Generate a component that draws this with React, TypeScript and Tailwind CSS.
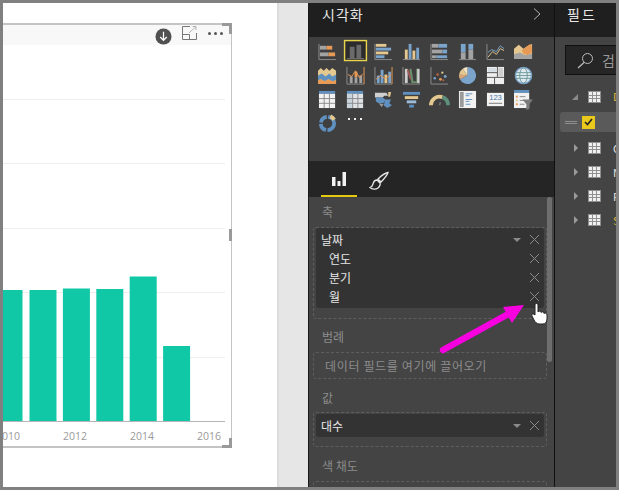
const KR = "font-['Noto_Sans_CJK_KR','Noto_Sans',sans-serif]";

const BARS = [
  { w: 19.5, top: 290 },
  { w: 27, top: 290 },
  { w: 27, top: 288.5 },
  { w: 27, top: 289 },
  { w: 27, top: 276.5 },
  { w: 27, top: 346 },
];

const GRIDLINES = [99, 163, 228, 292, 357];

const ORANGE = '#e79a55';
const TAN = '#e5c88f';
const BLUE = '#7ba4cc';
const GRAY = '#a3a3a3';
const LINE = '#8d8d8d';

function Axis() {
  return <path d="M1 2V18.5H19" fill="none" stroke={LINE} strokeWidth="1" />;
}

const ICONS: React.ReactNode[] = [
  <>
    <Axis />
    <rect x="2" y="4" width="7" height="4" fill={GRAY} />
    <rect x="9" y="4" width="6" height="4" fill={ORANGE} />
    <rect x="2" y="11" width="9" height="4" fill={GRAY} />
    <rect x="11" y="11" width="7" height="4" fill={ORANGE} />
  </>,
  <>
    <rect x="-1.5" y="-1.5" width="23" height="21" fill="#2c2c2c" stroke="#e8d44d" strokeWidth="1.5" />
    <rect x="4" y="5" width="5" height="12" fill="#6a6a6a" />
    <rect x="11" y="3" width="5" height="14" fill="#6a6a6a" />
    <path d="M1 17.5H19" stroke="#777" />
  </>,
  <>
    <Axis />
    <rect x="2" y="2" width="11" height="3" fill={TAN} />
    <rect x="2" y="6" width="16" height="3" fill={BLUE} />
    <rect x="2" y="10" width="13" height="3" fill={TAN} />
    <rect x="2" y="14" width="9" height="3" fill={BLUE} />
  </>,
  <>
    <path d="M1 18.5H19" stroke={LINE} />
    <rect x="3" y="8" width="3" height="10" fill={TAN} />
    <rect x="7" y="2" width="3" height="16" fill={BLUE} />
    <rect x="11" y="9" width="3" height="9" fill={TAN} />
    <rect x="15" y="6" width="3" height="12" fill={BLUE} />
  </>,
  <>
    <Axis />
    <rect x="2" y="2" width="7" height="4" fill={GRAY} />
    <rect x="9" y="2" width="9" height="4" fill={BLUE} />
    <rect x="2" y="8" width="11" height="4" fill={GRAY} />
    <rect x="13" y="8" width="5" height="4" fill={BLUE} />
    <rect x="2" y="14" width="5" height="3" fill={GRAY} />
    <rect x="7" y="14" width="11" height="3" fill={BLUE} />
  </>,
  <>
    <path d="M1 18.5H19" stroke={LINE} />
    <rect x="3" y="2" width="5" height="9" fill={BLUE} />
    <rect x="3" y="11" width="5" height="7" fill={GRAY} />
    <rect x="11" y="2" width="5" height="6" fill={BLUE} />
    <rect x="11" y="8" width="5" height="10" fill={GRAY} />
  </>,
  <>
    <Axis />
    <path d="M2 16L7 10L11 13L15 7L19 9" fill="none" stroke={TAN} />
    <path d="M2 11L6 8L11 10L15 4L19 7" fill="none" stroke={BLUE} />
  </>,
  <>
    <path d="M0 18V7L5 3L10 7L13 5L19 2V18Z" fill={TAN} />
    <path d="M8 9L13 5L17 2L19 5V11L14 14L10 12Z" fill={ORANGE} />
    <path d="M0 18V13L6 11L12 14L19 12V18Z" fill={GRAY} />
  </>,
  <>
    <path d="M0 5L3 2L6 5L9 2L12 5L15 2L19 5V19H0Z" fill={TAN} />
    <path d="M0 10L4 8L8 11L12 8L15 11L19 9V15L15 16L11 14L7 16L3 14L0 15Z" fill="#5f90c0" />
    <path d="M0 15L3 14L7 16L11 14L15 16L19 15V19H0Z" fill={ORANGE} />
  </>,
  <>
    <path d="M1 1V19H19" fill="none" stroke={LINE} />
    <path d="M19 1V19" stroke={ORANGE} />
    <rect x="4" y="11" width="3" height="7" fill={GRAY} />
    <rect x="9" y="6" width="3" height="6" fill={ORANGE} />
    <rect x="9" y="12" width="3" height="6" fill={GRAY} />
    <rect x="14" y="10" width="3" height="8" fill={GRAY} />
    <path d="M2 9L6 11L10 5L14 12L18 8" fill="none" stroke={ORANGE} />
  </>,
  <>
    <path d="M1 1V19H19" fill="none" stroke={LINE} />
    <path d="M19 1V19" stroke={ORANGE} />
    <rect x="3" y="10" width="3" height="8" fill={BLUE} />
    <rect x="7" y="4" width="3" height="14" fill={BLUE} />
    <rect x="11" y="9" width="3" height="9" fill={TAN} />
    <rect x="15" y="6" width="3" height="12" fill={BLUE} />
    <path d="M2 14L7 10L11 13L14 12L18 9" fill="none" stroke={ORANGE} />
  </>,
  <>
    <path d="M1 1V19H19" fill="none" stroke={LINE} />
    <rect x="3" y="3" width="3" height="15" fill="#cfcfcf" />
    <path d="M8 3H10L12 16H15V3H17V18H10L8 6Z" fill="#6b8f6b" />
    <rect x="16" y="3" width="2.5" height="15" fill="#cfcfcf" />
    <path d="M6 4L9 14" stroke="#a15a5a" strokeWidth="2" />
  </>,
  <>
    <path d="M1 1V19H19" fill="none" stroke={LINE} />
    <circle cx="5" cy="13" r="1.3" fill={BLUE} />
    <circle cx="8" cy="9" r="1.3" fill="#c0653a" />
    <circle cx="11" cy="14" r="1.5" fill={ORANGE} />
    <circle cx="13" cy="7" r="1.2" fill={TAN} />
    <circle cx="16" cy="11" r="1.5" fill={BLUE} />
    <circle cx="14" cy="15" r="1" fill="#c0653a" />
  </>,
  <>
    <path d="M10 1A9 9 0 1 1 2 14L10 10Z" fill={BLUE} />
    <path d="M10 10L2 14A9 9 0 0 1 1 9Z" fill="#d9a77a" />
    <path d="M10 10L1 9A9 9 0 0 1 5 3Z" fill={TAN} />
    <path d="M10 10L5 3A9 9 0 0 1 10 1Z" fill="#f0e2c5" />
  </>,
  <>
    <rect x="1" y="1" width="18" height="18" fill="#eee" />
    <path d="M1 7H12M12 1V12M1 12H19M9 12V19" stroke="#555" />
    <rect x="13" y="2" width="5" height="9" fill="#cfcfcf" />
    <rect x="2" y="2" width="9" height="4" fill="#d5dde5" />
  </>,
  <>
    <circle cx="10" cy="10" r="8.5" fill="#dfe9ef" stroke={BLUE} strokeWidth="1.5" />
    <ellipse cx="10" cy="10" rx="4" ry="8" fill="none" stroke="#6b9a9a" />
    <path d="M2 7H18M2 10H18M2 13H18" stroke="#6b9a9a" />
  </>,
  <>
    <rect x="1" y="1" width="17" height="3" fill="#5f90c0" />
    <rect x="1" y="4" width="17" height="15" fill="#f2f2f2" />
    <path d="M6.500 4V19M12 4V19M1 9H18M1 14H18" stroke="#8a8a8a" />
  </>,
  <>
    <rect x="1" y="1" width="17" height="3" fill="#5f90c0" />
    <rect x="1" y="4" width="17" height="15" fill="#dfe3e6" />
    <rect x="1" y="4" width="6" height="15" fill="#c9d4dd" />
    <path d="M7 4V19M12.500 4V19M1 9H18M1 14H18" stroke="#8a8a8a" />
  </>,
  <>
    <path d="M1 3H13L15 6H11L9 8H1Z" fill="#cfcfcf" />
    <path d="M2 8H9L12 10L10 14L5 14L2 12Z" fill="#5f90c0" />
    <path d="M15 2H18L17 7H15Z" fill={TAN} />
    <path d="M11 10H18L16 14L19 16L14 19L10 16L11 14Z" fill="#5f90c0" />
    <path d="M5 14L8 18L10 15Z" fill="#9a9a9a" />
  </>,
  <>
    <rect x="1" y="2" width="18" height="3" fill="#5f90c0" />
    <rect x="3" y="6.500" width="14" height="3" fill={TAN} />
    <rect x="5" y="11" width="10" height="3" fill="#9fbcd6" />
    <rect x="7.500" y="15.500" width="5" height="3" fill="#5f90c0" />
  </>,
  <>
    <path d="M1 16A9 9 0 0 1 13 7.500" fill="none" stroke={TAN} strokeWidth="4" />
    <path d="M13 7.500A9 9 0 0 1 19 16" fill="none" stroke="#5e8f7a" strokeWidth="4" />
    <path d="M10 16L11 13" stroke="#777" strokeWidth="1.5" />
  </>,
  <>
    <rect x="1" y="1" width="18" height="18" fill="#f2f2f2" />
    <rect x="2" y="2" width="4" height="16" fill="#9a9a9a" />
    <path d="M8 4H15M8 6H12M8 10H15M8 12H12M8 15H13" stroke="#5f90c0" strokeWidth="1" />
  </>,
  <>
    <rect x="1" y="3" width="18" height="14" fill="#f2f2f2" />
    <text x="10" y="11" textAnchor="middle" fontSize="8" fontFamily="Liberation Sans" fill="#4a7aa8">123</text>
    <path d="M3 14H17" stroke="#777" />
  </>,
  <>
    <rect x="0" y="0" width="16" height="3" fill="#5f90c0" />
    <rect x="0" y="3" width="16" height="16" fill="#f2f2f2" />
    <rect x="2" y="6" width="2" height="2" fill={ORANGE} />
    <rect x="2" y="10" width="2" height="2" fill={TAN} />
    <rect x="2" y="14" width="2" height="2" fill={ORANGE} />
    <path d="M6 7H12M6 11H11M6 15H11" stroke="#888" />
    <path d="M9 10H20L16 15V20L13 21V15Z" fill="#7a7a7a" />
  </>,
  <>
    <circle cx="10" cy="10" r="7" fill="none" stroke="#5f90c0" strokeWidth="4" strokeDasharray="11 1.5 9 1.5 9 1.5" />
    <path d="M13 2.500A8 8 0 0 1 17 6" fill="none" stroke={TAN} strokeWidth="4" />
  </>,
];

function Handle({ className }: { className: string }) {
  return <div className={`absolute bg-[#9a9a9a] ${className}`} />;
}

function Chart() {
  return (
    <div className="relative ml-[-3px] h-[425px] w-[232px] border-t-2 border-r border-b-2 border-[#c4c4c4]">
      <div className="flex h-[20px] items-center justify-end bg-[#f8f8f8] pr-[8px]">
        <svg width="17" height="17" viewBox="0 0 18 18" className="mr-[10px] mt-[2px]">
          <circle cx="9" cy="9" r="8.500" fill="#505050" />
          <path d="M9 4V13M5.500 9.500L9 13L12.500 9.500" fill="none" stroke="#fff" strokeWidth="1.3" />
        </svg>
        <svg width="15" height="14" viewBox="0 0 15 14" className="mr-[11px] mt-[-4px]">
          <path d="M8 .5H.5V13.500H14.500V7" fill="none" stroke="#777" />
          <path d="M.5 8.500H7.500V13.500" fill="none" stroke="#777" />
          <path d="M7 7L14 .5M10.500 .5H14V4" fill="none" stroke="#999" strokeWidth=".7" />
        </svg>
        <div className="mt-[-3px] flex gap-[3px]">
          <span className="size-[3px] rounded-full bg-[#555]" />
          <span className="size-[3px] rounded-full bg-[#555]" />
          <span className="size-[3px] rounded-full bg-[#555]" />
        </div>
      </div>
      <svg width="231" height="402" viewBox="0 45 231 402" className="block">
        {GRIDLINES.map((y) => (
          <line key={y} x1="0" x2="225" y1={y + 0.5} y2={y + 0.5} stroke="#efefef" />
        ))}
        {BARS.map((bar, i) => {
          const x = i === 0 ? 3 : 29.5 + (i - 1) * 33.4;
          return <rect key={i} x={x} y={bar.top} width={bar.w} height={421 - bar.top} fill="#10c8a6" />;
        })}
        <line x1="0" x2="225" y1="421.5" y2="421.5" stroke="#b5b5b5" />
        <g fontSize="10.5" fontFamily="'Open Sans', sans-serif" fill="#9a9a9a" textAnchor="end">
          <text x="20" y="440">2010</text>
          <text x="87" y="440">2012</text>
          <text x="154" y="440">2014</text>
          <text x="221" y="440">2016</text>
        </g>
      </svg>
      <Handle className="right-[-1px] top-[-2px] h-[3px] w-[10px]" />
      <Handle className="right-[-1px] top-[-2px] h-[11px] w-[3px]" />
      <Handle className="right-[-1px] top-[204px] h-[12px] w-[3px]" />
      <Handle className="right-[-1px] bottom-[-2px] h-[3px] w-[10px]" />
      <Handle className="right-[-1px] bottom-[-2px] h-[10px] w-[3px]" />
    </div>
  );
}

function XIcon() {
  return (
    <svg width="11" height="11" viewBox="0 0 11 11" className="shrink-0">
      <path d="M1 1L10 10M10 1L1 10" stroke="#8a8a8a" strokeWidth="1" />
    </svg>
  );
}

function Caret() {
  return <span className="mr-[8px] h-0 w-0 border-x-[4px] border-t-[4px] border-x-transparent border-t-[#8a8a8a]" />;
}

function FieldRow({ label, sub, caret }: { label: string; sub?: boolean; caret?: boolean }) {
  return (
    <div className={`flex h-[19px] items-center pr-[4px] ${sub ? 'pl-[13px]' : 'pl-[5px]'}`}>
      <span className="flex-1 text-[12px] text-[#e6e6e6]">{label}</span>
      {caret && <Caret />}
      <XIcon />
    </div>
  );
}

function WellLabel({ children, className }: { children: string; className: string }) {
  return <div className={`pl-[9px] text-[12px] leading-[16px] text-[#8c8c8c] ${className}`}>{children}</div>;
}

function Wells() {
  return (
    <div className="relative flex-1 overflow-hidden bg-[#444444] pl-[4px] pr-[6px]">
      <div className="absolute right-[2px] top-0 h-[165px] w-[5px] rounded-[2px] bg-[#6e6e6e]" />
      <WellLabel className="mt-[7px]">축</WellLabel>
      <div className="mt-[7px] h-[92px] w-[234px] rounded-[3px] border border-dashed border-[#5e5e5e] px-[2px]">
        <div className="h-[80px] rounded-[3px] bg-[#333333] py-[2px]">
          <FieldRow label="날짜" caret />
          <FieldRow label="연도" sub />
          <FieldRow label="분기" sub />
          <FieldRow label="월" sub />
        </div>
      </div>
      <WellLabel className="mt-[10px]">범례</WellLabel>
      <div className="mt-[7px] flex h-[27px] w-[234px] items-center rounded-[3px] border border-dashed border-[#5e5e5e] pl-[11px] text-[12px] tracking-[0.65px] text-[#8c8c8c]">
        데이터 필드를 여기에 끌어오기
      </div>
      <WellLabel className="mt-[11px]">값</WellLabel>
      <div className="mt-[6px] h-[35px] w-[234px] rounded-[3px] border border-dashed border-[#5e5e5e] px-[2px] pt-[1px]">
        <div className="flex h-[23px] items-center rounded-[3px] bg-[#333333] pl-[5px] pr-[4px]">
          <span className="flex-1 text-[12px] text-[#e6e6e6]">대수</span>
          <Caret />
          <XIcon />
        </div>
      </div>
      <WellLabel className="mt-[11px]">색 채도</WellLabel>
      <div className="mt-[7px] h-[30px] w-[234px] rounded-[3px] border border-dashed border-[#5e5e5e]" />
    </div>
  );
}

function VizPanel() {
  return (
    <div className="flex w-[245px] shrink-0 flex-col">
      <div className="flex h-[34px] items-start justify-between bg-[#1f1f1f] pl-[13px] pr-[13px] pt-[1px]">
        <span className="text-[14px] leading-[20px] tracking-[1px] text-[#e8e8e8]">시각화</span>
        <svg width="8" height="12" viewBox="0 0 8 12" className="mt-[4px]">
          <path d="M1 .5L7 6L1 11.500" fill="none" stroke="#b0b0b0" />
        </svg>
      </div>
      <div className="grid h-[124px] grid-cols-[repeat(8,28px)] auto-rows-[24px] bg-[#3f3f3f] pl-[4px] pt-[2px]">
        {ICONS.map((icon, i) => (
          <div key={i} className="flex items-center justify-center">
            <svg width="19" height="19" viewBox="0 0 20 20" className="overflow-visible">
              {icon}
            </svg>
          </div>
        ))}
        <div className="flex items-start justify-center gap-[4px] pt-[7px]">
          <span className="size-[2px] bg-[#eee]" />
          <span className="size-[2px] bg-[#eee]" />
          <span className="size-[2px] bg-[#eee]" />
        </div>
      </div>
      <div className="flex h-[36px] bg-[#252525] pl-[12px]">
        <div className="flex h-[36px] w-[36px] items-start justify-center border-b-2 border-[#e3c80f] pt-[10px]">
          <svg width="16" height="16" viewBox="0 0 16 16">
            <path d="M1 6H4.500V15H1ZM6.500 10H9.500V15H6.500ZM11.500 1H15V15H11.500Z" fill="#f2f2f2" />
          </svg>
        </div>
        <svg width="20" height="20" viewBox="0 0 20 20" className="ml-[12px] mt-[10px]">
          <path
            d="M19 1.500C16 2 12 5 9 8L12 11C15 8 18 4.500 19 1.500ZM8 9C5 9 4.500 11 4 13C3.500 15 2.500 16 1 16.500C3 18.500 7 18.500 9 17C11 15.500 11.500 13 11 12Z"
            fill="none"
            stroke="#e6e6e6"
            strokeWidth="1.3"
          />
        </svg>
      </div>
      <Wells />
    </div>
  );
}

function TableIcon() {
  return (
    <svg width="13" height="12" viewBox="0 0 13 12" className="block shrink-0">
      <rect width="13" height="12" fill="#8f8f8f" />
      <rect x="1" y="1" width="11" height="10" fill="#f0f0f0" />
      <path d="M4.500 1V11M8.500 1V11M1 4.500H12M1 7.500H12" stroke="#8f8f8f" />
    </svg>
  );
}

function FieldsPanel() {
  const rows = [
    { letter: 'C', color: 'text-[#e6e6e6]' },
    { letter: 'N', color: 'text-[#e6e6e6]' },
    { letter: 'P', color: 'text-[#e6e6e6]' },
    { letter: 'S', color: 'text-[#d8b93a]' },
  ];
  return (
    <div className="flex min-w-0 flex-1 flex-col overflow-hidden border-l border-[#111]">
      <div className="h-[34px] bg-[#1f1f1f] pl-[12px] pt-[1px] text-[14px] leading-[20px] tracking-[2px] text-[#e8e8e8]">
        필드
      </div>
      <div className="flex-1 bg-[#444444] pl-[10px] pt-[8px]">
        <div className="flex h-[30px] items-center whitespace-nowrap border border-[#111] border-r-0 bg-[#262626] pl-[11px]">
          <svg width="17" height="17" viewBox="0 0 17 17" className="shrink-0">
            <circle cx="10.500" cy="6.500" r="5" fill="none" stroke="#bdbdbd" />
            <path d="M7 10.500L1 16" stroke="#bdbdbd" strokeWidth="1.2" />
          </svg>
          <span className="ml-[8px] text-[14px] text-[#9a9a9a]">검</span>
        </div>
        <div className="mt-[15px] flex h-[13px] items-center pl-[7px]">
          <span className="h-0 w-0 border-b-[6px] border-l-[6px] border-b-[#8a8a8a] border-l-transparent" />
          <span className="ml-[10px]"><TableIcon /></span>
          <span className="ml-[12px] text-[11px] text-[#d8b93a]">D</span>
        </div>
        <div className="ml-[-5px] mt-[9px] flex h-[20px] items-center rounded-l-[3px] bg-[#5a5a5a] pl-[5px]">
          <span className="block h-[3px] w-[12px] border-y border-[#8f8f8f]" />
          <span className="ml-[5px] flex size-[13px] items-center justify-center bg-[#e8c91c]">
            <svg width="9" height="8" viewBox="0 0 9 8">
              <path d="M1 4L3.500 6.500L8 1" fill="none" stroke="#222" strokeWidth="1.6" />
            </svg>
          </span>
        </div>
        <div className="mt-[4px]">
          {rows.map((row) => (
            <div key={row.letter} className="flex h-[24px] items-center pl-[9px]">
              <span className="h-0 w-0 border-y-[4px] border-l-[4px] border-y-transparent border-l-[#9a9a9a]" />
              <span className="ml-[10px]"><TableIcon /></span>
              <span className={`ml-[12px] text-[11px] ${row.color}`}>{row.letter}</span>
            </div>
          ))}
        </div>
      </div>
    </div>
  );
}

export default function App() {
  return (
    <div className={`relative flex h-[490px] w-[619px] overflow-hidden bg-[#808080] p-[3px] ${KR}`}>
      <div className="w-[274px] shrink-0 overflow-hidden bg-white pt-[20px]">
        <Chart />
      </div>
      <div className="w-[31px] shrink-0 border-l-2 border-[#dcdcdc] bg-[#e6e6e6]" />
      <div className="w-[1px] shrink-0 bg-[#1a1a1a]" />
      <VizPanel />
      <FieldsPanel />
      {/* annotation arrow and cursor on top of the screenshot */}
      <svg width="619" height="490" viewBox="0 0 619 490" className="pointer-events-none absolute left-0 top-0">
        <path d="M443 350L510 313" stroke="#f700e0" strokeWidth="6.5" strokeLinecap="round" />
        <path d="M524 305L503 307L512 323Z" fill="#f700e0" />
        <path
          d="M535 305C535 303 538 303 538 305V312C539 310.500 541 311 541 312.500C542 311 544 312 544 313.500C545 312.500 547 313 547 315V319C547 322 545 324 543 324H539C537 324 535 322 534 320L532 316C531 314 533 313 535 315Z"
          fill="#fff"
          stroke="#222"
          strokeWidth="1"
        />
      </svg>
    </div>
  );
}
